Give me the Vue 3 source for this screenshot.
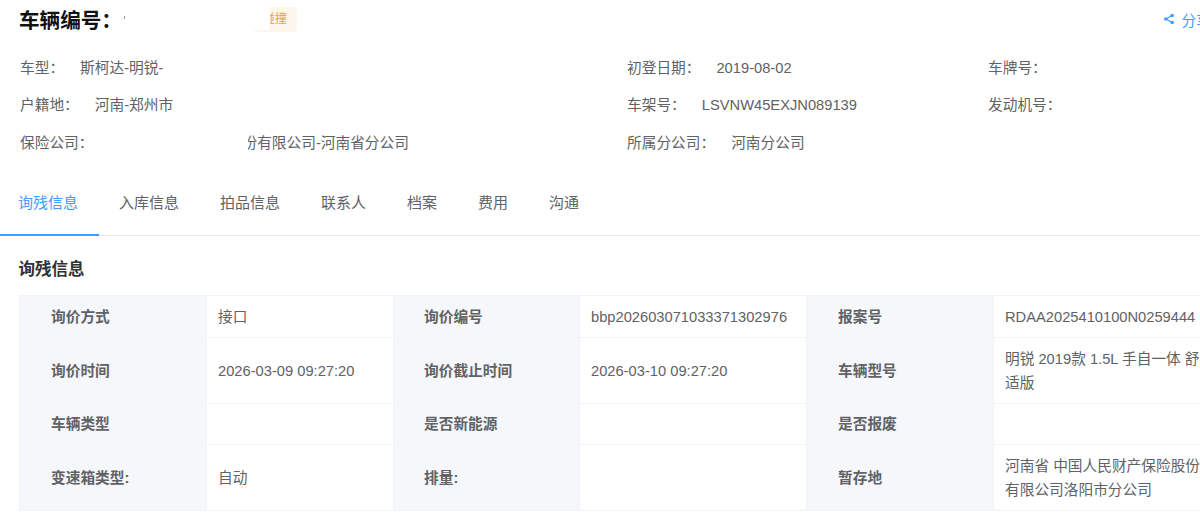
<script setup>
const tabs = ['询残信息', '入库信息', '拍品信息', '联系人', '档案', '费用', '沟通']
const rows = [
  { cls: 'short', cells: ['询价方式', '接口', '询价编号', 'bbp202603071033371302976', '报案号', 'RDAA2025410100N0259444'] },
  { cls: 'tall', cells: ['询价时间', '2026-03-09 09:27:20', '询价截止时间', '2026-03-10 09:27:20', '车辆型号', '明锐 2019款 1.5L 手自一体 舒适版'] },
  { cls: 'thin', cells: ['车辆类型', '', '是否新能源', '', '是否报废', ''] },
  { cls: 'tall', cells: ['变速箱类型:', '自动', '排量:', '', '暂存地', '河南省 中国人民财产保险股份有限公司洛阳市分公司'] }
]
</script>

<template>
  <div class="viewport">
    <div class="page">
      <header class="head">
        <h1 class="title">车辆编号：</h1>
        <span class="speck"></span>
        <span class="tag">碰撞<i class="tag-cover"></i></span>
        <a class="share">
          <svg class="share-icon" viewBox="0 0 12 12" width="12" height="12">
            <path d="M9 2.5 3 6l6 3.5" fill="none" stroke="#409eff" stroke-width="1.2" />
            <circle cx="9.2" cy="2.5" r="1.8" fill="#409eff" />
            <circle cx="2.8" cy="6" r="1.8" fill="#409eff" />
            <circle cx="9.2" cy="9.5" r="1.8" fill="#409eff" />
          </svg>
          分享
        </a>
      </header>

      <section class="info">
        <div class="info-item"><span>车型：</span><span class="val">斯柯达-明锐-</span></div>
        <div class="info-item"><span>初登日期：</span><span class="val">2019-08-02</span></div>
        <div class="info-item"><span>车牌号：</span></div>
        <div class="info-item"><span>户籍地：</span><span class="val">河南-郑州市</span></div>
        <div class="info-item"><span>车架号：</span><span class="val">LSVNW45EXJN089139</span></div>
        <div class="info-item"><span>发动机号：</span></div>
        <div class="info-item"><span>保险公司：</span><span class="redact"></span><span>份有限公司-河南省分公司</span></div>
        <div class="info-item"><span>所属分公司：</span><span class="val">河南分公司</span></div>
        <div class="info-item"></div>
      </section>

      <nav class="tabs">
        <span v-for="(t, i) in tabs" :key="t" class="tab" :class="{ active: i === 0 }">{{ t }}</span>
      </nav>

      <h2 class="section">询残信息</h2>

      <table class="grid">
        <colgroup>
          <col class="c1" /><col class="c2" /><col class="c3" /><col class="c4" /><col class="c5" /><col class="c6" />
        </colgroup>
        <tbody>
          <tr v-for="(r, ri) in rows" :key="ri" :class="r.cls">
            <template v-for="(c, ci) in r.cells" :key="ci">
              <th v-if="ci % 2 === 0">{{ c }}</th>
              <td v-else>{{ c }}</td>
            </template>
          </tr>
        </tbody>
      </table>
    </div>
  </div>
</template>

<style>
html, body { margin: 0; background: #fff; overflow: hidden; }
</style>

<style scoped>
.viewport {
  width: 1200px;
  height: 516px;
  overflow: hidden;
  font-family: "Liberation Sans", "Noto Sans CJK SC", sans-serif;
  color: #606266;
  font-size: 14.7px;
}
.page { width: 1240px; }
.head {
  display: flex;
  align-items: center;
  height: 42px;
  padding-left: 19px;
  width: 1192px;
}
.title { margin: 0; font-size: 20.6px; line-height: 28px; font-weight: 700; color: #111; width: 105px; }
.speck { width: 1px; height: 3px; background: #999; margin-right: 128px; margin-top: -8px; }
.tag {
  position: relative;
  display: inline-block;
  box-sizing: border-box;
  width: 44px;
  height: 25px;
  margin-top: -4px;
  padding-left: 10px;
  line-height: 25px;
  font-size: 12px;
  color: #e6a23c;
  background: #fdf6ec;
  border-radius: 4px;
  white-space: nowrap;
}
.tag-cover {
  position: absolute;
  left: -3px;
  top: 0;
  width: 20px;
  height: 23px;
  background: #fff;
}
.share {
  margin-left: auto;
  margin-top: -4px;
  display: flex;
  align-items: center;
  gap: 7px;
  color: #409eff;
  white-space: nowrap;
}
.share-icon { display: block; }
.info {
  display: grid;
  grid-template-columns: 607px 361px 1fr;
  padding: 7.5px 0 0 20px;
}
.info-item { height: 37.5px; line-height: 37.5px; white-space: nowrap; }
.val { margin-left: 16px; }
.redact {
  position: relative;
  z-index: 1;
  display: inline-block;
  width: 155px;
  height: 20px;
  margin-right: -6px;
  vertical-align: middle;
  background: #fff;
}
.tabs {
  display: flex;
  margin-top: 10px;
  height: 63px;
  border-bottom: 1px solid #e9ebf0;
  width: 1200px;
  font-size: 15px;
}
.tab {
  padding: 0 20px;
  margin-right: 1px;
  line-height: 62px;
  height: 63px;
  box-sizing: border-box;
}
.tab.active {
  padding: 0 21px 0 18px;
  margin-right: 0;
  color: #409eff;
  border-bottom: 2px solid #409eff;
  height: 64px;
}
.section {
  margin: 22px 0 14px 18.5px;
  font-size: 16.5px;
  line-height: 23px;
  font-weight: 700;
  color: #303133;
}
.grid {
  margin-left: 19px;
  width: 1198px;
  table-layout: fixed;
  border-collapse: collapse;
}
.c1 { width: 187px; } .c2 { width: 187px; } .c3 { width: 186px; }
.c4 { width: 227px; } .c5 { width: 187px; } .c6 { width: 224px; }
.grid th, .grid td { border: 1px solid #f3f4f8; box-sizing: border-box; }
.grid th {
  background: #f5f7fa;
  text-align: left;
  padding: 0 0 0 31px;
  line-height: 24px;
  font-weight: 700;
  color: #606266;
}
.grid th:nth-child(3) { padding-left: 30px; }
.grid td { padding: 0 11px; line-height: 24px; color: #606266; }
.short { height: 42px; }
.thin { height: 41px; }
.tall { height: 66px; }
</style>
